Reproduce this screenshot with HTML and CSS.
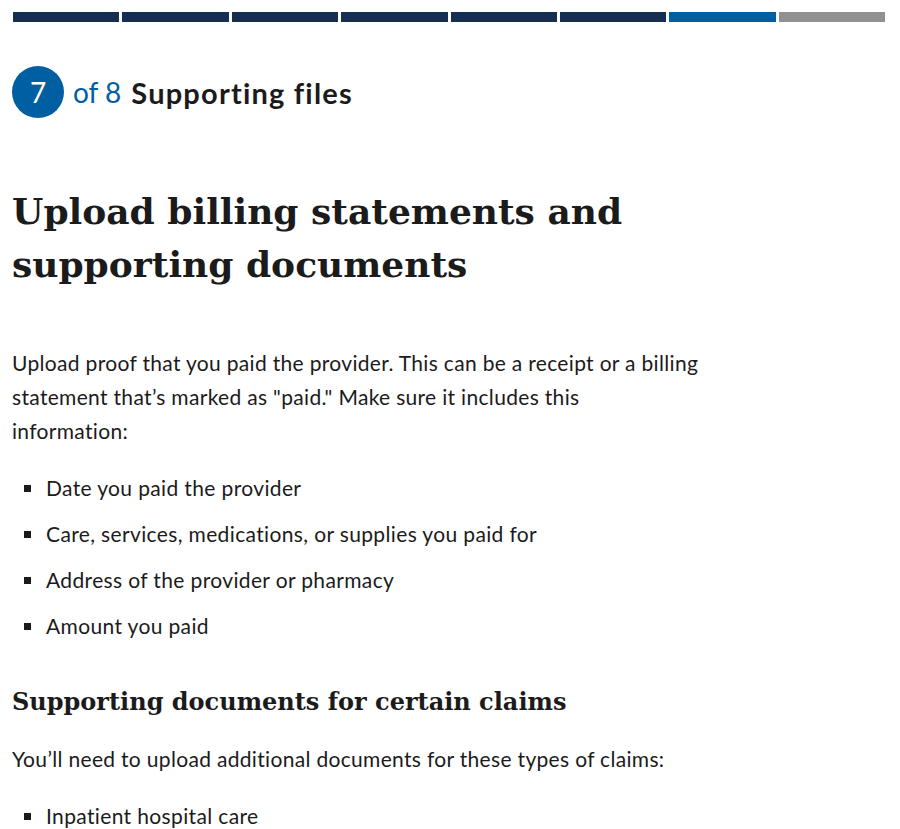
FILE: index.html
```
<!DOCTYPE html>
<html lang="en">
<head>
<meta charset="utf-8">
<title>Supporting files</title>
<link rel="stylesheet" href="styles.css">
</head>
<body>
<main class="page">
  <div class="progress">
    <span class="seg done"></span>
    <span class="seg done"></span>
    <span class="seg done"></span>
    <span class="seg done"></span>
    <span class="seg done"></span>
    <span class="seg done"></span>
    <span class="seg current"></span>
    <span class="seg todo"></span>
  </div>
  <div class="step">
    <span class="step-num">7</span>
    <span class="step-of">of 8</span>
    <span class="step-title">Supporting files</span>
  </div>
  <h1 class="title">Upload billing statements and supporting documents</h1>
  <p class="intro">Upload proof that you paid the provider. This can be a receipt or a billing statement that’s marked as "paid." Make sure it includes this<br>information:</p>
  <ul class="bullets">
    <li>Date you paid the provider</li>
    <li>Care, services, medications, or supplies you paid for</li>
    <li>Address of the provider or pharmacy</li>
    <li>Amount you paid</li>
  </ul>
  <h2 class="subtitle">Supporting documents for certain claims</h2>
  <p class="note">You’ll need to upload additional documents for these types of claims:</p>
  <ul class="bullets second">
    <li>Inpatient hospital care</li>
  </ul>
</main>
</body>
</html>
```
FILE: styles.css
```
html, body {
  margin: 0;
  padding: 0;
  background: #ffffff;
}
body {
  font-family: "Lato", "Liberation Sans", sans-serif;
  color: #1b1b1b;
}
.page {
  padding: 12px 15px 0 13px;
}
.progress {
  display: flex;
  gap: 3px;
  height: 10px;
}
.seg {
  flex: 1;
  display: block;
}
.seg.done { background: #162e51; }
.seg.current { background: #005ea2; }
.seg.todo { background: #919191; }

.step {
  display: flex;
  align-items: center;
  margin-top: 44px;
  margin-left: -1px;
  height: 52px;
}
.step-num {
  width: 52px;
  height: 52px;
  border-radius: 50%;
  background: #005ea2;
  color: #fff;
  display: flex;
  align-items: center;
  justify-content: center;
  font-size: 28px;
}
.step-of {
  color: #005ea2;
  font-size: 28px;
  margin-left: 9px;
}
.step-title {
  font-size: 29px;
  font-weight: 700;
  letter-spacing: 1.2px;
  margin-left: 10px;
}
.title {
  font-family: "DejaVu Serif", serif;
  font-weight: 700;
  font-size: 36px;
  line-height: 53px;
  margin: 67px 0 0 -1px;
  max-width: 660px;
}
.intro, .note {
  font-size: 21px;
  letter-spacing: 0.32px;
  line-height: 34px;
  margin: 0;
  margin-left: -1px;
}
.intro {
  margin-top: 55px;
  max-width: 700px;
}
.bullets {
  list-style: none;
  margin: 23px 0 0 0;
  padding: 0 0 0 11px;
  display: flex;
  flex-direction: column;
  gap: 12px;
}
.bullets li {
  display: flex;
  align-items: center;
  gap: 15px;
  font-size: 21px;
  letter-spacing: 0.36px;
  line-height: 34px;
}
.bullets li::before {
  content: "";
  width: 7px;
  height: 7px;
  background: #1b1b1b;
  flex: none;
}
.subtitle {
  font-family: "DejaVu Serif", serif;
  font-weight: 700;
  font-size: 24px;
  line-height: 36px;
  margin: 41px 0 0 -1px;
}
.note {
  margin-top: 22px;
}
.bullets.second {
  margin-top: 23px;
}
```
